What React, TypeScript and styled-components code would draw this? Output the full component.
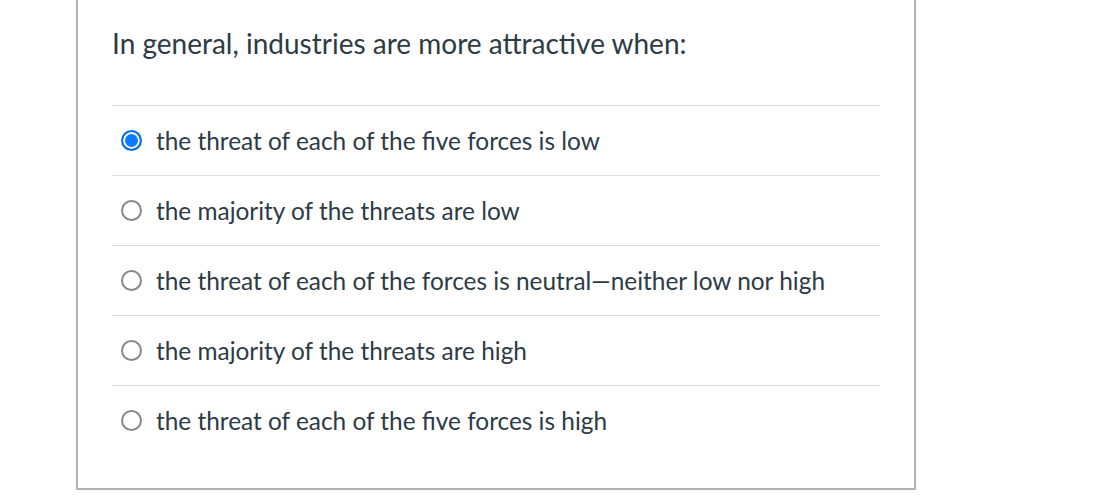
import styled, { createGlobalStyle } from "styled-components";

const GlobalStyle = createGlobalStyle`
  html, body {
    margin: 0;
    padding: 0;
    background: #fff;
    font-family: Lato, "Noto Sans", sans-serif;
  }
`;

const options = [
  "the threat of each of the five forces is low",
  "the majority of the threats are low",
  "the threat of each of the forces is neutral\u2014neither low nor high",
  "the majority of the threats are high",
  "the threat of each of the five forces is high",
];

export default function App() {
  const selected = 0;

  return (
    <>
      <GlobalStyle />
      <Card>
        <Question>In general, industries are more attractive when:</Question>
        <Answers>
          {options.map((text, i) => (
            <Answer key={i}>
              <Radio $checked={i === selected} />
              <AnswerText>{text}</AnswerText>
            </Answer>
          ))}
        </Answers>
      </Card>
    </>
  );
}

const Card = styled.div`
  box-sizing: border-box;
  width: 840px;
  margin-left: 76px;
  padding: 24px 34px 33px 34px;
  border: 2px solid #b3b3b3;
  border-top: none;
  background: #fff;
`;

const Question = styled.div`
  font-size: 28px;
  line-height: 38px;
  color: #2d3b45;
  margin-bottom: 43px;
`;

const Answers = styled.div`
  display: flex;
  flex-direction: column;
`;

const Answer = styled.label`
  display: flex;
  align-items: center;
  gap: 14px;
  height: 69px;
  padding-left: 9px;
  border-top: 1px solid #dcdcdc;
  cursor: pointer;
`;

const Radio = styled.span<{ $checked: boolean }>`
  box-sizing: border-box;
  flex: none;
  width: 21px;
  height: 21px;
  border-radius: 50%;
  border: 2px solid ${(p) => (p.$checked ? "#0770e3" : "#888")};
  background: ${(p) => (p.$checked ? "#0a7bff" : "#fff")};
  box-shadow: ${(p) => (p.$checked ? "inset 0 0 0 2px #fff" : "none")};
`;

const AnswerText = styled.span`
  font-size: 24.4px;
  color: #2d3b45;
`;
